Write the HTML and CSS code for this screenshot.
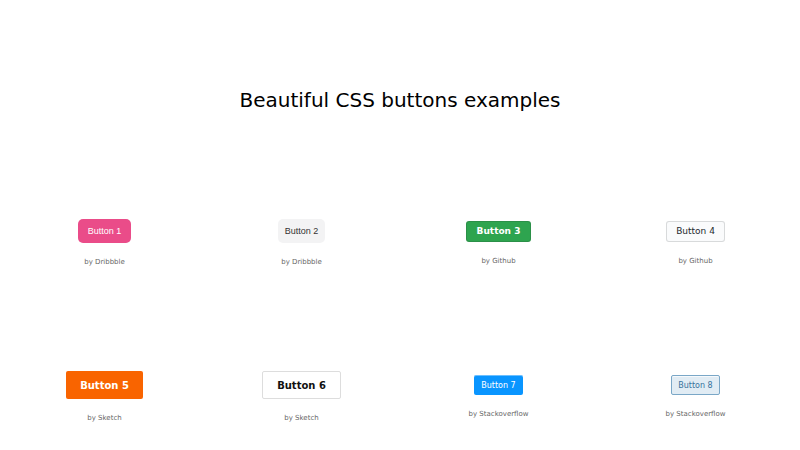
FILE: index.html
```html
<!DOCTYPE html>
<html lang="en">
<head>
  <meta charset="UTF-8" />
  <meta name="viewport" content="width=device-width, initial-scale=1.0"/>
  <title>Beautiful CSS buttons examples</title>
  <link rel="stylesheet" href="styles.css">
</head>
<body>

  <header>
    <h1>Beautiful CSS buttons examples</h1>
  </header>

  <main class="grid">
    <div class="cell">
      <button class="btn-dribbble">Button 1</button>
      <span class="credit">by Dribbble</span>
    </div>
    <div class="cell">
      <button class="btn-dribbble-light">Button 2</button>
      <span class="credit">by Dribbble</span>
    </div>
    <div class="cell">
      <button class="btn-github-primary">Button 3</button>
      <span class="credit">by Github</span>
    </div>
    <div class="cell">
      <button class="btn-github">Button 4</button>
      <span class="credit">by Github</span>
    </div>

    <div class="cell">
      <button class="btn-sketch">Button 5</button>
      <span class="credit">by Sketch</span>
    </div>
    <div class="cell">
      <button class="btn-sketch-light">Button 6</button>
      <span class="credit">by Sketch</span>
    </div>
    <div class="cell">
      <button class="btn-so">Button 7</button>
      <span class="credit">by Stackoverflow</span>
    </div>
    <div class="cell">
      <button class="btn-so-light">Button 8</button>
      <span class="credit">by Stackoverflow</span>
    </div>
  </main>

</body>
</html>
```

FILE: styles.css
```css
body {
  font-family: "DejaVu Sans", sans-serif;
  background: #fff;
  color: #000;
  margin: 0;
  height: 100vh;
  overflow: hidden;
}

header {
  padding: 88px 0 77px;
  text-align: center;
}

h1 {
  margin: 0;
  font-size: 20px;
  font-weight: normal;
  line-height: 24px;
}

.grid {
  display: grid;
  grid-template-columns: repeat(4, 1fr);
  grid-auto-rows: 108px;
  row-gap: 46px;
  padding: 0 6px;
}

.cell {
  display: flex;
  flex-direction: column;
  align-items: center;
  justify-content: center;
  gap: 14px;
}

.credit {
  font-size: 7px;
  color: #666;
  line-height: 10px;
}

button {
  font-family: "DejaVu Sans", sans-serif;
  cursor: pointer;
  border: none;
  margin: 0;
}

/* dribbble */
.btn-dribbble,
.btn-dribbble-light {
  font-family: "Liberation Sans", Arial, sans-serif;
  font-size: 9px;
  height: 24px;
  padding: 0 10px;
  border-radius: 5px;
}

.btn-dribbble {
  background: #ea4c89;
  color: #fff;
}

.btn-dribbble-light {
  background: #f3f3f4;
  color: #333;
  padding: 0 7px;
}

/* github */
.btn-github-primary,
.btn-github {
  font-size: 9px;
  height: 21px;
  padding: 0 10px;
  border-radius: 3px;
}

.btn-github-primary {
  background: #2ea44f;
  color: #fff;
  font-weight: bold;
  border: 1px solid rgba(27, 31, 35, .15);
}

.btn-github {
  background: #fafbfc;
  color: #24292e;
  padding: 0 9px;
  border: 1px solid rgba(27, 31, 35, .15);
}

/* sketch */
.btn-sketch,
.btn-sketch-light {
  font-size: 10px;
  font-weight: bold;
  height: 28px;
  padding: 0 14px;
  border-radius: 2px;
}

.btn-sketch {
  background: #f96400;
  color: #fff;
}

.btn-sketch-light {
  background: #fff;
  color: #111;
  border: 1px solid #ddd;
}

/* stackoverflow */
.btn-so,
.btn-so-light {
  font-size: 8px;
  height: 20px;
  padding: 0 7px;
  border-radius: 2px;
}

.btn-so {
  background: #0995ff;
  color: #fff;
  box-shadow: inset 0 1px 0 rgba(255, 255, 255, .4);
}

.btn-so-light {
  background: #e1ecf4;
  color: #39739d;
  padding: 0 6px;
  border: 1px solid #7aa7c7;
  box-shadow: inset 0 1px 0 rgba(255, 255, 255, .7);
}
```
